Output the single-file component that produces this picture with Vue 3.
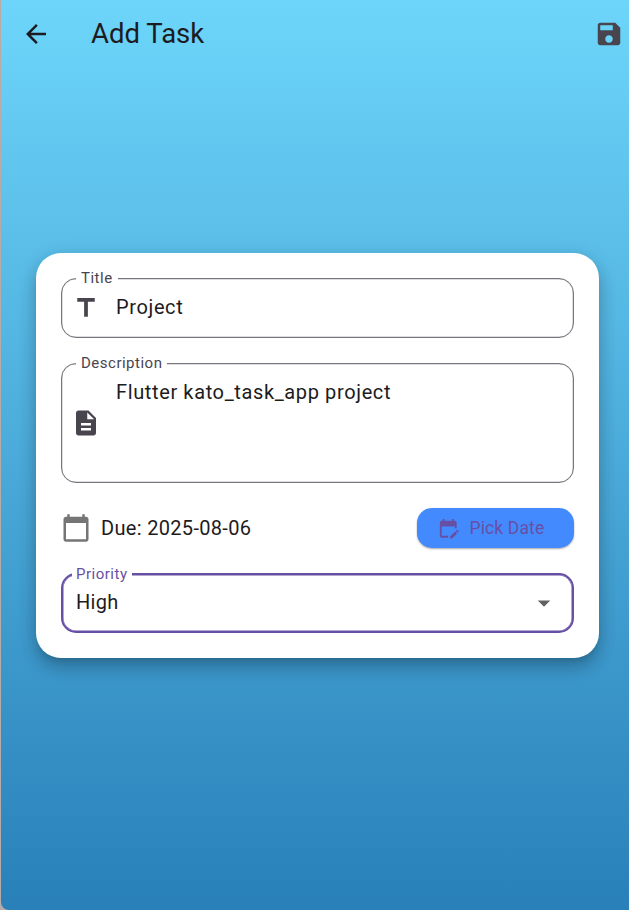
<script setup>
import { ref } from 'vue'

const title = ref('Project')
const description = ref('Flutter kato_task_app project')
const dueDate = ref('2025-08-06')
const priority = ref('High')
</script>

<template>
  <div class="window">
    <div class="screen">
      <header class="app-bar">
        <svg class="icon dark" viewBox="0 0 24 24"><path d="M20 11H7.83l5.59-5.59L12 4l-8 8 8 8 1.41-1.41L7.83 13H20v-2z" /></svg>
        <h1>Add Task</h1>
        <svg class="icon muted" viewBox="0 0 24 24"><path d="M17 3H5c-1.11 0-2 .9-2 2v14c0 1.1.89 2 2 2h14c1.1 0 2-.9 2-2V7l-4-4zm-5 16c-1.66 0-3-1.34-3-3s1.34-3 3-3 3 1.34 3 3-1.34 3-3 3zm3-10H5V5h10v4z" /></svg>
      </header>

      <main class="card">
        <div class="field">
          <span class="label">Title</span>
          <svg class="icon muted" viewBox="0 0 24 24"><path d="M5 4v3h5.5v12h3V7H19V4z" /></svg>
          <span class="value">{{ title }}</span>
        </div>

        <div class="field area">
          <span class="label">Description</span>
          <svg class="icon muted" viewBox="0 0 24 24"><path d="M14 2H6c-1.1 0-1.99.9-1.99 2L4 20c0 1.1.89 2 1.99 2H18c1.1 0 2-.9 2-2V8l-6-6zm2 16H8v-2h8v2zm0-4H8v-2h8v2zm-3-5V3.5L18.5 9H13z" /></svg>
          <span class="value">{{ description }}</span>
        </div>

        <div class="due">
          <svg class="icon gray" viewBox="0 0 24 24"><path d="M20 3h-1V1h-2v2H7V1H5v2H4c-1.1 0-2 .9-2 2v16c0 1.1.9 2 2 2h16c1.1 0 2-.9 2-2V5c0-1.1-.9-2-2-2zm0 18H4V8h16v13z" /></svg>
          <span class="due-text">Due: {{ dueDate }}</span>
          <button class="pick" type="button">
            <svg viewBox="0 0 24 24"><path d="M12 22H5c-1.11 0-2-.9-2-2l.01-14c0-1.1.88-2 1.99-2h1V2h2v2h8V2h2v2h1c1.1 0 2 .9 2 2v6h-2v-2H5v10h7v2zm10.13-5.01.71-.71c.39-.39.39-1.02 0-1.41l-.71-.71c-.39-.39-1.02-.39-1.41 0l-.71.71 2.12 2.12zm-.71.71-5.3 5.3H14v-2.12l5.3-5.3 2.12 2.12z" /></svg>
            <span>Pick Date</span>
          </button>
        </div>

        <div class="field select">
          <span class="label">Priority</span>
          <span class="value">{{ priority }}</span>
          <svg class="icon arrow" viewBox="0 0 24 24"><path d="M7 10l5 5 5-5z" /></svg>
        </div>
      </main>
    </div>
  </div>
</template>

<style>
body {
  margin: 0;
}
</style>

<style scoped>
.window {
  height: 910px;
  padding-left: 1px;
  box-sizing: border-box;
  background: #b5aca9;
  overflow: hidden;
  font-family: Roboto, sans-serif;
}
.screen {
  height: 910px;
  display: flex;
  flex-direction: column;
  border-bottom-left-radius: 8px;
  background: linear-gradient(#6dd5fa, #2980b9);
}
.app-bar {
  height: 68px;
  display: flex;
  align-items: center;
  padding: 0 5px 0 20px;
}
h1 {
  flex: 1;
  margin: 0 0 2px 40px;
  font-size: 27.5px;
  font-weight: 400;
  line-height: 35px;
  color: #1d1b20;
}
.icon {
  flex: none;
  width: 30px;
  height: 30px;
}
.dark { fill: #1d1b20; }
.muted { fill: #49454f; }
.gray { fill: #757575; }
.card {
  display: flex;
  flex-direction: column;
  gap: 25px;
  box-sizing: border-box;
  width: 563px;
  height: 405px;
  margin: 185px 0 0 35px;
  padding: 25px;
  border-radius: 25px;
  background: #fff;
  box-shadow: 0 6px 6px -4px rgba(0, 0, 0, 0.12), 0 10px 16px 1px rgba(0, 0, 0, 0.16), 0 4px 18px 2px rgba(0, 0, 0, 0.1);
}
.field {
  position: relative;
  display: flex;
  align-items: center;
  box-sizing: border-box;
  height: 60px;
  padding: 0 9px;
  border: 1px solid #79747e;
  border-radius: 15px;
  box-shadow: inset 0 0 0 0.25px #79747e;
}
.label {
  position: absolute;
  top: -11px;
  left: 14px;
  padding: 0 5px;
  background: #fff;
  color: #49454f;
  font-size: 15px;
  line-height: 20px;
  letter-spacing: 0.5px;
}
.value {
  margin: 0 0 2px 15px;
  color: #1d1b20;
  font-size: 20px;
  line-height: 30px;
  letter-spacing: 0.625px;
}
.area {
  height: 120px;
}
.area .value {
  align-self: flex-start;
  margin-top: 13px;
}
.due {
  display: flex;
  align-items: center;
  height: 40px;
}
.due-text {
  flex: 1;
  margin-left: 10px;
  color: #1d1b20;
  font-size: 20px;
  letter-spacing: 0.32px;
}
.pick {
  display: flex;
  align-items: center;
  gap: 10px;
  width: 157px;
  height: 40px;
  padding: 0 0 0 20px;
  border: 0;
  border-radius: 15px;
  background: #448aff;
  box-shadow: 0 1px 2px rgba(0, 0, 0, 0.35);
  color: #6750a4;
  font-family: inherit;
  font-size: 17.5px;
  letter-spacing: 0.125px;
}
.pick svg {
  width: 22.5px;
  height: 22.5px;
  fill: #6750a4;
}
.select {
  border: 2px solid #6750a4;
  padding: 0 13px;
  box-shadow: inset 0 0 0 0.5px #6750a4;
}
.select .label {
  top: -11px;
  left: 9px;
  padding-left: 4px;
  color: #6750a4;
}
.select .value {
  flex: 1;
  margin: 0 0 2px;
  letter-spacing: 0.3px;
}
.arrow {
  fill: #616161;
}
</style>
